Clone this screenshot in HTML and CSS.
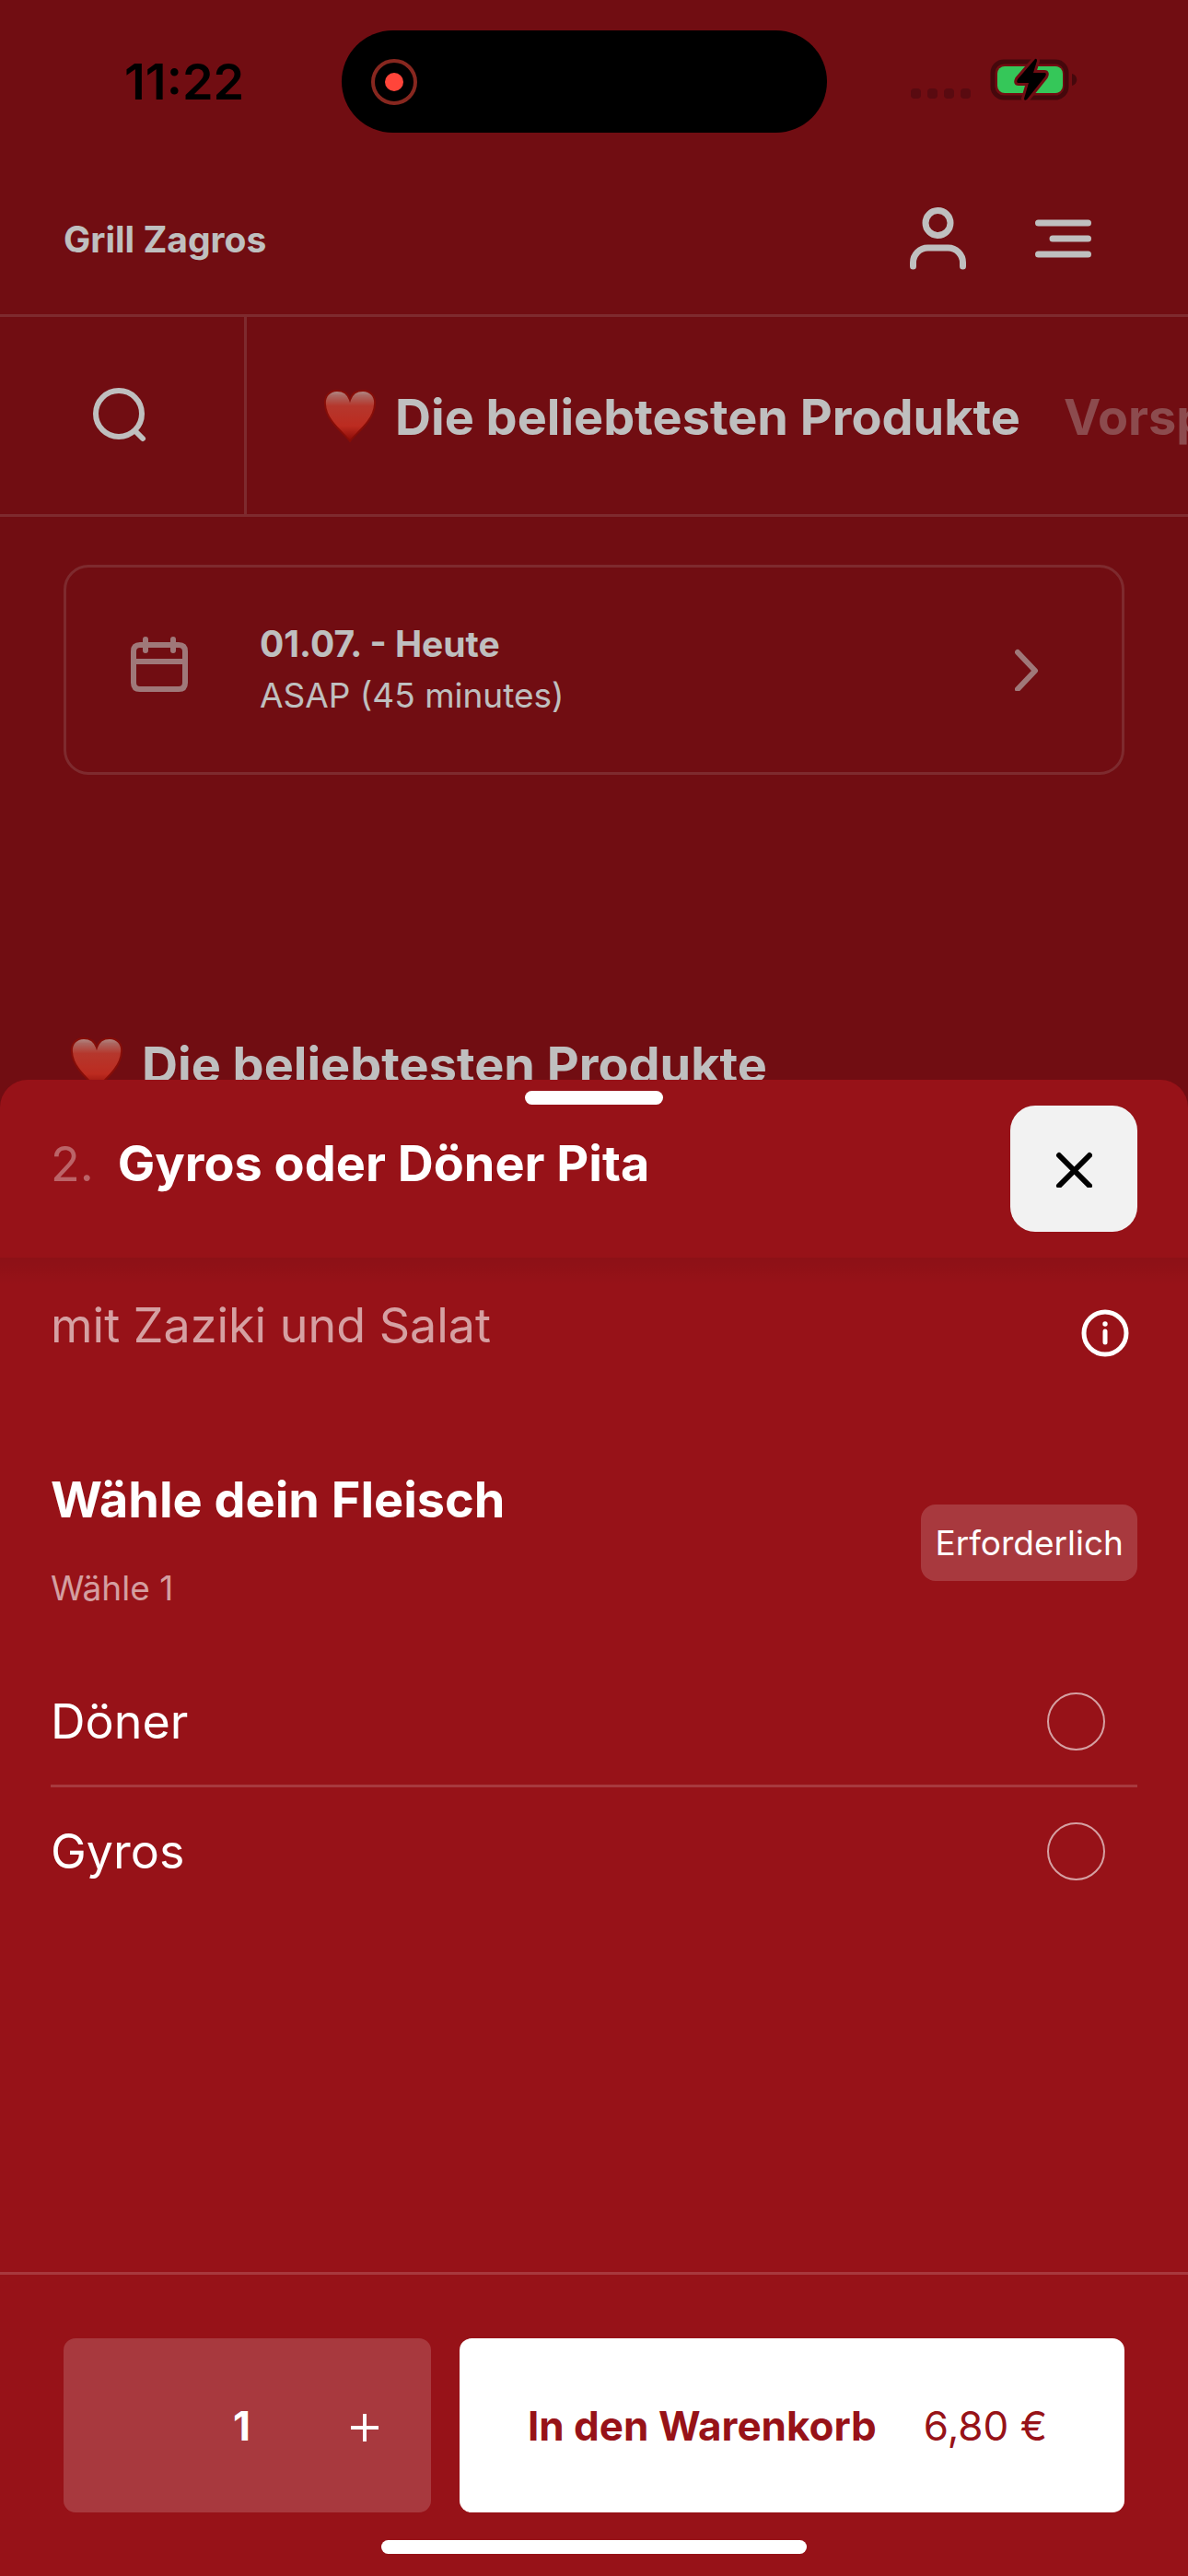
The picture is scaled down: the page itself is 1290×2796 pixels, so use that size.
FILE: index.html
```
<!DOCTYPE html>
<html lang="de">
<head>
    <meta charset="UTF-8">
    <meta name="viewport" content="width=device-width, initial-scale=1.0">
    <title>Grill Zagros</title>
    <link rel="stylesheet" href="styles.css">
</head>
<body>
    <svg class="defs" width="0" height="0" aria-hidden="true">
        <defs>
            <linearGradient id="heart-fill" x1="0" y1="0" x2="0" y2="1">
                <stop offset="0" stop-color="#efc0bb"/>
                <stop offset="0.1" stop-color="#e68a82"/>
                <stop offset="0.3" stop-color="#f24a3c"/>
                <stop offset="0.7" stop-color="#fb3a2b"/>
                <stop offset="1" stop-color="#b80d08"/>
            </linearGradient>
            <symbol id="heart" viewBox="0 0 58 58">
                <path d="M29 57C25 50 3 36 2 17C1 8 7 2 15 2C22 2 27 6 29 12C31 6 36 2 43 2C51 2 57 8 56 17C55 36 33 50 29 57Z" fill="url(#heart-fill)" stroke="#b3120b" stroke-width="2"/>
            </symbol>
        </defs>
    </svg>

    <div class="status">
        <span class="time">11:22</span>
        <div class="island">
            <svg width="50" height="50" viewBox="0 0 50 50">
                <circle cx="25" cy="25" r="23" fill="none" stroke="#87271f" stroke-width="4"/>
                <circle cx="25" cy="25" r="10" fill="#ff453a"/>
            </svg>
        </div>
        <svg class="battery" width="182" height="50" viewBox="0 0 182 50">
            <g fill="#590a10">
                <rect x="1" y="34" width="11" height="11" rx="4"/>
                <rect x="19" y="34" width="11" height="11" rx="4"/>
                <rect x="37" y="34" width="11" height="11" rx="4"/>
                <rect x="55" y="34" width="11" height="11" rx="4"/>
            </g>
            <rect x="90" y="5" width="80" height="39" rx="12" fill="none" stroke="#45080c" stroke-width="5"/>
            <path d="M176 18C183 20 183 29 176 31Z" fill="#45080c"/>
            <rect x="95" y="10" width="71" height="29" rx="8" fill="#35c759"/>
            <path d="M136 2L117 24Q115 28 118 28H129L124 45Q124 48 127 46L147 21Q149 17 146 17H134L138 4Q138 1 136 2Z" fill="#000" stroke="#710d13" stroke-width="6" paint-order="stroke"/>
        </svg>
    </div>

    <header class="top">
        <h1>Grill Zagros</h1>
        <div class="actions">
            <button type="button" aria-label="Konto">
                <svg width="61" height="70" viewBox="0 0 61 70" fill="none" stroke="currentColor" stroke-width="7" stroke-linecap="round">
                    <circle cx="30.500" cy="18" r="13.500"/>
                    <path d="M3.500 65V61A16 16 0 0 1 19.500 45H41.500A16 16 0 0 1 57.500 61V65"/>
                </svg>
            </button>
            <button type="button" aria-label="Menü">
                <svg width="61" height="42" viewBox="0 0 61 42" fill="none" stroke="currentColor" stroke-width="7" stroke-linecap="round">
                    <path d="M3.500 4H57.500M19 21H57.500M3.500 38H57.500"/>
                </svg>
            </button>
        </div>
    </header>

    <nav class="categories">
        <button type="button" class="search" aria-label="Suche">
            <svg width="60" height="60" viewBox="0 0 60 60" fill="none" stroke="currentColor" stroke-width="6" stroke-linecap="round">
                <circle cx="28" cy="28" r="25"/>
                <path d="M46 47L54 55"/>
            </svg>
        </button>
        <div class="tabs">
            <a href="#beliebt" class="active"><svg class="heart"><use href="#heart"/></svg>Die beliebtesten Produkte</a>
            <a href="#vorspeisen">Vorspeisen</a>
        </div>
    </nav>

    <main>
        <button type="button" class="delivery">
            <svg width="62" height="72" viewBox="0 0 62 72" fill="none" stroke="currentColor" stroke-width="6" stroke-linecap="round">
                <path d="M10 9H52Q59 9 59 16V50Q59 57 52 57H10Q3 57 3 50V16Q3 9 10 9ZM3 27H59M16 3V15M46 3V15"/>
            </svg>
            <span class="when">
                <strong>01.07. - Heute</strong>
                <span>ASAP (45 minutes)</span>
            </span>
            <svg width="26" height="46" viewBox="0 0 26 46" fill="none" stroke="currentColor" stroke-width="6" stroke-linecap="round" stroke-linejoin="round">
                <path d="M3 4L22 24L3 44"/>
            </svg>
        </button>
        <h2 id="beliebt"><svg class="heart"><use href="#heart"/></svg>Die beliebtesten Produkte</h2>
    </main>

    <div class="backdrop"></div>

    <form class="sheet">
        <span class="handle"></span>
        <header class="sheet-head">
            <h2><span class="number">2.</span>Gyros oder Döner Pita</h2>
            <button type="button" class="close" aria-label="Schließen">
                <svg width="40" height="40" viewBox="0 0 40 40" stroke="currentColor" stroke-width="6" stroke-linecap="round">
                    <path d="M4 5L37 38M37 5L4 38"/>
                </svg>
            </button>
        </header>

        <div class="content">
            <div class="description">
                <p>mit Zaziki und Salat</p>
                <button type="button" aria-label="Informationen">
                    <svg width="52" height="52" viewBox="0 0 52 52" fill="none" stroke="currentColor" stroke-width="5" stroke-linecap="round">
                        <circle cx="26" cy="26" r="23"/>
                        <path d="M26 24V36"/>
                        <circle cx="26" cy="16" r="2.700" fill="currentColor" stroke="none"/>
                    </svg>
                </button>
            </div>

            <div class="group-head">
                <div>
                    <h3 id="fleisch">Wähle dein Fleisch</h3>
                    <p>Wähle 1</p>
                </div>
                <span class="badge">Erforderlich</span>
            </div>
            <div class="options" role="radiogroup" aria-labelledby="fleisch">
                <label>Döner <input type="radio" name="fleisch" value="doener"></label>
                <label>Gyros <input type="radio" name="fleisch" value="gyros"></label>
            </div>
        </div>

        <footer>
            <div class="stepper">
                <button type="button" aria-label="Weniger" disabled></button>
                <input type="text" inputmode="numeric" value="1" aria-label="Anzahl">
                <button type="button" aria-label="Mehr">
                    <svg width="30" height="34" viewBox="0 0 30 34" stroke="currentColor" stroke-width="4">
                        <path d="M0 19H30M15 4V34"/>
                    </svg>
                </button>
            </div>
            <button type="submit" class="add"><strong>In den Warenkorb</strong><span>6,80 €</span></button>
        </footer>
        <span class="home"></span>
    </form>
</body>
</html>
```

FILE: styles.css
```
* {
    box-sizing: border-box;
}

body {
    margin: 0;
    min-height: 100vh;
    overflow: hidden;
    color: white;
    background-color: #971218;
    font-family: Inter, "Liberation Sans", sans-serif;
    font-size: 37px;
}

h1, h2, h3, p {
    margin: 0;
}

h2, h3 {
    font-size: 54px;
    font-weight: 700;
    line-height: 64px;
}

button {
    display: flex;
    align-items: center;
    justify-content: center;
    padding: 0;
    border: 0;
    background: none;
    color: inherit;
    font: inherit;
}

a {
    color: inherit;
    text-decoration: none;
}

.defs {
    position: absolute;
}

/* status bar */
.status {
    position: relative;
    z-index: 2;
    display: flex;
    align-items: flex-start;
    justify-content: space-between;
    height: 177px;
    padding: 33px 120px 0 135px;
    color: black;
}

.time {
    width: 146px;
    font-size: 54px;
    font-weight: 600;
    line-height: 111px;
}

.island {
    display: flex;
    align-items: center;
    width: 527px;
    height: 111px;
    padding-left: 32px;
    border-radius: 56px;
    background-color: black;
}

.battery {
    margin-top: 29px;
}

/* shop header */
.top {
    display: flex;
    align-items: center;
    justify-content: space-between;
    height: 167px;
    padding: 0 105px 0 69px;
    border-bottom: 3px solid rgba(255, 255, 255, 0.17);
}

.top h1 {
    font-size: 39px;
    font-weight: 700;
}

.actions {
    display: flex;
    align-items: center;
    gap: 75px;
}

.categories {
    display: flex;
    height: 217px;
    border-bottom: 3px solid rgba(255, 255, 255, 0.17);
}

.search {
    flex: none;
    width: 268px;
    padding-right: 3px;
    border-right: 3px solid rgba(255, 255, 255, 0.17);
}

.tabs {
    display: flex;
    align-items: center;
    gap: 47px;
    padding: 3px 0 0 83px;
    overflow: hidden;
    white-space: nowrap;
    font-size: 54px;
    font-weight: 700;
    line-height: 64px;
}

.tabs a {
    color: rgba(255, 255, 255, 0.35);
}

.tabs a.active {
    color: white;
}

.heart {
    width: 58px;
    height: 58px;
    margin-right: 20px;
    vertical-align: -8px;
}

main {
    padding: 52px 69px 0;
}

.delivery {
    justify-content: flex-start;
    width: 100%;
    height: 228px;
    padding: 0 90px 0 70px;
    border: 3px solid rgba(255, 255, 255, 0.17);
    border-radius: 27px;
    color: rgba(255, 255, 255, 0.6);
}

.when {
    display: flex;
    flex: 1;
    flex-direction: column;
    margin-left: 78px;
    color: white;
    line-height: 56px;
    text-align: left;
}

strong {
    font-weight: 700;
}

.when strong {
    font-size: 39px;
}

main h2 {
    margin-top: 283px;
    padding-left: 7px;
}

.backdrop {
    position: fixed;
    inset: 0;
    background-color: rgba(0, 0, 0, 0.25);
}

/* product sheet */
.sheet {
    position: fixed;
    z-index: 3;
    right: 0;
    bottom: 0;
    left: 0;
    border-radius: 30px 30px 0 0;
    background-color: #971218;
}

.handle {
    position: absolute;
    top: 12px;
    left: 50%;
    width: 150px;
    height: 15px;
    margin-left: -75px;
    border-radius: 8px;
    background-color: white;
}

.sheet-head {
    display: flex;
    justify-content: space-between;
    height: 193px;
    padding: 28px 55px;
}

.sheet-head h2 {
    padding-top: 31px;
}

.number {
    margin-right: 26px;
    color: rgba(255, 255, 255, 0.35);
    font-size: 52px;
    font-weight: 400;
}

.close {
    width: 138px;
    height: 137px;
    border-radius: 27px;
    background-color: #f2f2f2;
    color: black;
}

.content {
    padding: 42px 55px 388px;
    background: linear-gradient(rgba(0, 0, 0, 0.07), transparent 30px);
}

.description {
    display: flex;
    justify-content: space-between;
    margin-bottom: 109px;
    color: rgba(255, 255, 255, 0.6);
    font-size: 52px;
    line-height: 64px;
}

.description button {
    width: 70px;
    height: 80px;
    color: white;
}

.group-head {
    display: flex;
    align-items: center;
    justify-content: space-between;
    margin-bottom: 47px;
}

.group-head p {
    margin-top: 36px;
    color: rgba(255, 255, 255, 0.6);
    line-height: 56px;
}

.badge {
    padding: 0 15px;
    border-radius: 16px;
    background-color: rgba(255, 255, 255, 0.17);
    line-height: 83px;
}

.options label {
    display: flex;
    align-items: center;
    justify-content: space-between;
    height: 138px;
    padding-right: 35px;
    font-size: 52px;
}

.options label + label {
    height: 141px;
    border-top: 3px solid rgba(255, 255, 255, 0.17);
}

.options input {
    appearance: none;
    width: 63px;
    height: 63px;
    margin: 0;
    border: 2px solid rgba(255, 255, 255, 0.6);
    border-radius: 50%;
}

footer {
    display: flex;
    gap: 31px;
    padding: 69px;
    border-top: 3px solid rgba(255, 255, 255, 0.17);
    font-size: 44px;
}

.stepper {
    display: flex;
    flex: none;
    width: 399px;
    height: 189px;
    padding-right: 12px;
    border-radius: 13px;
    background-color: rgba(255, 255, 255, 0.17);
}

.stepper button {
    flex: none;
    width: 120px;
}

.stepper input {
    flex: 1;
    min-width: 0;
    padding: 0;
    border: 0;
    background: none;
    color: white;
    font: inherit;
    font-weight: 700;
    text-align: center;
}

.add {
    flex: 1;
    gap: 51px;
    padding-right: 10px;
    border-radius: 13px;
    background-color: white;
    color: #971218;
}

.home {
    position: absolute;
    bottom: 24px;
    left: 50%;
    width: 462px;
    height: 15px;
    margin-left: -231px;
    border-radius: 8px;
    background-color: white;
}
```
